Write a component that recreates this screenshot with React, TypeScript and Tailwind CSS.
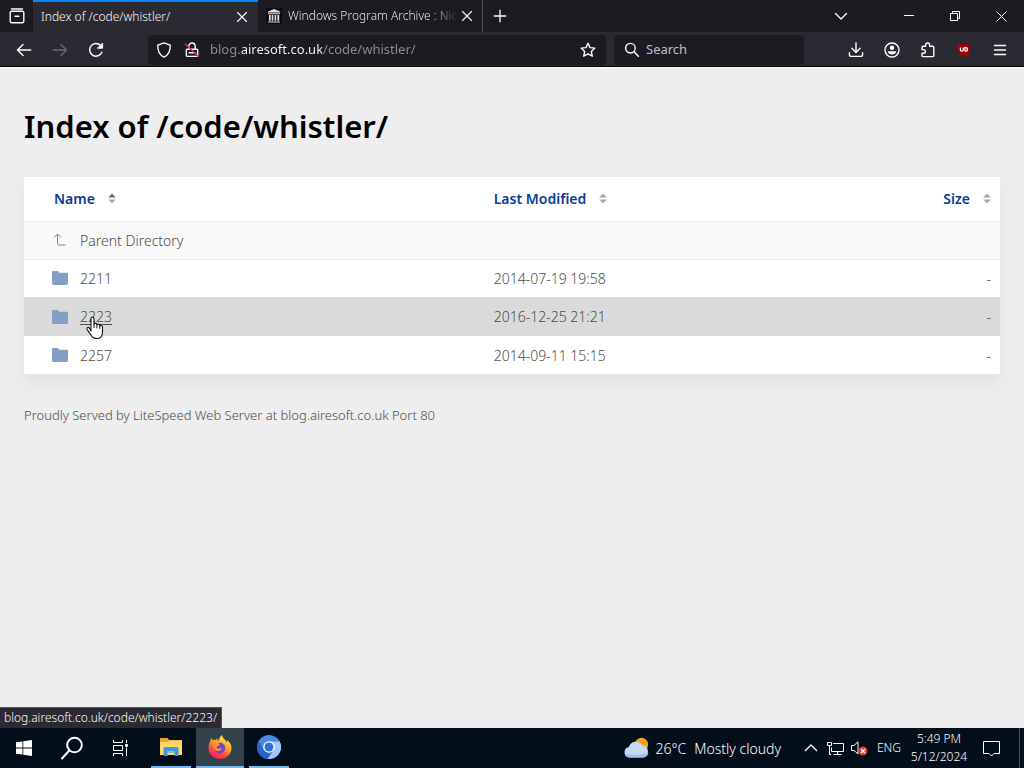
import type { ReactNode } from "react";

type Entry = { name: string; modified: string; hovered?: boolean };

const entries: Entry[] = [
  { name: "2211", modified: "2014-07-19 19:58" },
  { name: "2223", modified: "2016-12-25 21:21", hovered: true },
  { name: "2257", modified: "2014-09-11 15:15" },
];

function Icon({ size = 16, className = "", children }: { size?: number; className?: string; children: ReactNode }) {
  return (
    <svg
      width={size}
      height={size}
      viewBox="0 0 16 16"
      fill="none"
      stroke="currentColor"
      strokeWidth="1.4"
      strokeLinecap="round"
      strokeLinejoin="round"
      className={`shrink-0 ${className}`}
      aria-hidden="true"
    >
      {children}
    </svg>
  );
}

function IconButton({ label, className = "", children }: { label: string; className?: string; children: ReactNode }) {
  return (
    <button type="button" aria-label={label} className={`flex shrink-0 items-center justify-center ${className}`}>
      {children}
    </button>
  );
}

function CloseIcon({ size = 16 }: { size?: number }) {
  return (
    <Icon size={size}>
      <path strokeWidth="1.1" d="M3.5 3.5l9 9M12.5 3.5l-9 9" />
    </Icon>
  );
}

function TabStrip() {
  return (
    <div className="flex h-8 bg-[#1c1b22]">
      <IconButton label="Firefox View" className="w-[33px]">
        <Icon>
          <path d="M2.5 1h11M1.2 4.6v8.600a1.600 1.600 0 0 0 1.600 1.600h10.400a1.600 1.600 0 0 0 1.600-1.600V4.600a1.300 1.300 0 0 0-1.300-1.300h-11a1.300 1.300 0 0 0-1.300 1.300zM6 8.300h4" />
        </Icon>
      </IconButton>
      <div className="flex w-[225px] items-center border-t-2 border-[#0a84ff] bg-[#2b2a33] px-2">
        <span className="flex-1 truncate text-[12px] font-light">Index of /code/whistler/</span>
        <IconButton label="Close tab" className="size-4">
          <CloseIcon />
        </IconButton>
      </div>
      <div className="flex w-[225px] items-center border-r border-[#52525e] pr-[7px] pl-2">
        <svg width="16" height="16" viewBox="0 0 16 16" className="mr-1.5 shrink-0" aria-hidden="true">
          <rect width="16" height="16" fill="#0b0b0d" />
          <path
            fill="#e4e4e4"
            d="M8 1l6.3 2.7v.8H1.7v-.8zM2 5.3h12v.9H2zM2.9 7h1.8v5.8H2.9zM5.7 7h1.6v5.8H5.7zM8.6 7h1.6v5.8H8.6zM11.4 7h1.8v5.8h-1.8zM2 13.4h12v1.2H2z"
          />
        </svg>
        <span className="flex-1 bg-linear-to-r from-[#fbfbfe] from-85% to-[#1c1b22] bg-clip-text text-[12px] font-light whitespace-nowrap text-transparent">
          Windows Program Archive : Nic
        </span>
        <IconButton label="Close tab" className="size-4">
          <CloseIcon />
        </IconButton>
      </div>
      <IconButton label="New tab" className="ml-px w-8">
        <Icon>
          <path strokeWidth="1.3" d="M8 2.2v11.6M2.2 8h11.6" />
        </Icon>
      </IconButton>
      <div className="flex-1" />
      <IconButton label="List all tabs" className="mr-[29px] w-8">
        <Icon>
          <path d="M2.5 5.5L8 11l5.5-5.5" />
        </Icon>
      </IconButton>
      <IconButton label="Minimize" className="w-[46px]">
        <svg width="10" height="10" viewBox="0 0 10 10" stroke="currentColor" aria-hidden="true">
          <path d="M0 4.5h10" />
        </svg>
      </IconButton>
      <IconButton label="Restore" className="w-[46px]">
        <svg width="10" height="10" viewBox="0 0 10 10" fill="none" stroke="currentColor" aria-hidden="true">
          <path d="M.5 2.5h7v7h-7zM2.5 2.5v-2h7v7h-2" />
        </svg>
      </IconButton>
      <IconButton label="Close window" className="w-[46px]">
        <svg width="11" height="11" viewBox="0 0 11 11" stroke="currentColor" aria-hidden="true">
          <path d="M.5 .5l10 10M10.500 .5l-10 10" />
        </svg>
      </IconButton>
    </div>
  );
}

function Toolbar() {
  return (
    <div className="flex h-[35px] items-center border-b border-black bg-[#2b2a33] pt-0.5">
      <IconButton label="Back" className="ml-1.5 w-9">
        <Icon>
          <path d="M14.7 8H1.6M7 2.6L1.5 8 7 13.4" />
        </Icon>
      </IconButton>
      <IconButton label="Forward" className="w-9 text-[#6a6972]">
        <Icon>
          <path d="M1.3 8h13.1M9 2.6L14.5 8 9 13.4" />
        </Icon>
      </IconButton>
      <IconButton label="Reload" className="w-9">
        <Icon>
          <path strokeWidth="1.5" d="M13.8 10.2A6.3 6.3 0 1 1 12.6 3.6" />
          <path fill="currentColor" strokeWidth="1" d="M14.6 1.4v4.8H9.8z" />
        </Icon>
      </IconButton>
      <div className="ml-[34px] flex h-[30px] min-w-0 flex-1 items-center rounded-sm bg-[#1c1b22] pr-2.5 pl-2">
        <Icon>
          <path d="M8 .9l6.2 2.2c.3 4.9-1.2 9.5-6.2 12C3 12.6 1.500 8 1.800 3.100z" />
        </Icon>
        <Icon className="ml-3">
          <path d="M4.8 7V4.200a3.200 3.200 0 0 1 6.400 0V7M3.200 7.300h9.600a.9.900 0 0 1 .9.900v5.200a1 1 0 0 1-1 1H3.300a1 1 0 0 1-1-1V8.200a.9.900 0 0 1 .9-.9zM5 10.800h6" />
          <path stroke="#e22850" strokeWidth="1.500" d="M1.200 2l13 12.300" />
        </Icon>
        <input
          type="text"
          aria-label="Address"
          defaultValue="blog.airesoft.co.uk/code/whistler/"
          className="ml-2.5 min-w-0 flex-1 bg-[linear-gradient(to_right,#8f8e97_30px,#fbfbfe_30px,#fbfbfe_112px,#8f8e97_112px)] bg-clip-text text-[13px] text-transparent outline-none"
        />
        <IconButton label="Bookmark this page" className="size-4">
          <Icon>
            <path d="M8 1.200l2 4.400 4.900.5-3.600 3.300 1 4.800L8 11.800l-4.300 2.400 1-4.800L1.100 6.100 6 5.600z" />
          </Icon>
        </IconButton>
      </div>
      <label className="ml-2 flex h-[30px] w-[190px] items-center rounded-sm bg-[#1c1b22] px-2.5">
        <Icon>
          <circle cx="6.400" cy="6.200" r="4.800" />
          <path strokeWidth="1.600" d="M10 9.800l4.400 4.400" />
        </Icon>
        <input
          type="text"
          aria-label="Search"
          placeholder="Search"
          className="ml-1.5 min-w-0 flex-1 bg-transparent text-[13px] outline-none placeholder:text-[#bfbfc9]"
        />
      </label>
      <div className="ml-[34px] flex pr-1.5">
        <IconButton label="Downloads" className="w-9">
          <Icon>
            <path d="M8 .8v9.400M3.900 6.300L8 10.400l4.100-4.100M1.400 10.800v1.600a2 2 0 0 0 2 2h9.200a2 2 0 0 0 2-2v-1.600" />
          </Icon>
        </IconButton>
        <IconButton label="Account" className="w-9">
          <Icon>
            <circle cx="8" cy="8" r="7" />
            <circle cx="8" cy="5.800" r="2.200" fill="currentColor" stroke="none" />
            <path d="M3.600 9.300h8.800a4.600 4.600 0 0 1-8.800 0z" fill="currentColor" stroke="none" />
          </Icon>
        </IconButton>
        <IconButton label="Extensions" className="w-9">
          <Icon>
            <path d="M5.600 4.200V3a2 2 0 0 1 4 0v1.200h3a1.200 1.200 0 0 1 1.200 1.200v8a1.200 1.200 0 0 1-1.200 1.200H3.200A1.200 1.200 0 0 1 2 13.400v-2.200h1.600a1.500 1.500 0 0 0 0-3.600H2V5.400a1.200 1.200 0 0 1 1.200-1.200z" />
          </Icon>
        </IconButton>
        <IconButton label="uBlock Origin" className="w-9">
          <svg width="16" height="16" viewBox="0 0 16 16" fill="none" aria-hidden="true">
            <path fill="#9c0006" d="M8 .6c1.800 1.300 4 1.900 6.600 2 .2 6-.4 9.400-6.600 13C1.800 12 1.200 8.600 1.400 2.600 4 2.500 6.200 1.900 8 .6z" />
            <path stroke="#fff" strokeWidth="1.200" d="M4.400 5.400v2.400a1.400 1.400 0 0 0 2.800 0V5.400M9 9.300V5.700h.8a1.700 1.700 0 0 1 0 3.500H8.600" />
          </svg>
        </IconButton>
        <IconButton label="Open menu" className="w-9">
          <Icon>
            <path d="M2.500 3.500h11M2.500 8h11M2.500 12.500h11" />
          </Icon>
        </IconButton>
      </div>
    </div>
  );
}

function SortMark({ active = false }: { active?: boolean }) {
  return (
    <svg width="8" height="11" viewBox="0 0 8 11" aria-hidden="true">
      <path d="M4 .5L7.800 4.500H.2z" fill={active ? "#6b6b6b" : "#a9a9a9"} />
      <path d="M4 10.500L.2 6.500h7.600z" fill="#a9a9a9" />
    </svg>
  );
}

function SortButton({ label, active = false }: { label: string; active?: boolean }) {
  return (
    <button type="button" className="inline-flex items-center gap-[13px] font-semibold text-[#0a3a9c]">
      {label}
      <SortMark active={active} />
    </button>
  );
}

function FolderIcon() {
  return (
    <svg width="16" height="14" viewBox="0 0 16 14" className="shrink-0" aria-hidden="true">
      <path
        fill="#859fc3"
        d="M1.300 0h4.200c.5 0 .8.200 1 .6l.6 1.200h7.600c.7 0 1.300.5 1.300 1.200v9.600c0 .8-.6 1.400-1.300 1.400H1.300C.6 14 0 13.400 0 12.600V1.300C0 .6.600 0 1.300 0z"
      />
    </svg>
  );
}

function HandCursor() {
  return (
    <svg width="18" height="24" viewBox="0 0 18 24" className="absolute top-2.5 left-1.5 z-10" aria-hidden="true">
      <path
        fill="#fff"
        stroke="#111"
        strokeWidth="1.100"
        strokeLinejoin="round"
        d="M5 15V2.500a1.500 1.500 0 0 1 3 0V8.500c0-1.800 2.700-1.800 2.900 0v.8c.2-1.600 2.700-1.500 2.900.2v.9c.3-1.400 2.700-1.200 2.700.6v5.200c0 3.800-2 6.300-5.600 6.300-3 0-4.500-1-6-3.600L1.200 13.600c-1-1.800.9-2.900 2.200-1.500z"
      />
      <path stroke="#111" strokeWidth="1" d="M8 8.500v3.500M10.900 9.300v3M13.800 10.300v2.500" />
    </svg>
  );
}

function DirectoryTable() {
  return (
    <table className="w-full table-fixed bg-white text-left text-[14px] font-light text-[#4c4c4c] shadow-[0_8px_16px_rgba(40,70,80,0.07)]">
      <thead>
        <tr className="h-11 border-b border-[#ececec]">
          <th scope="col" className="w-[47%] pl-[30px]">
            <SortButton label="Name" active />
          </th>
          <th scope="col" className="w-[30%] pl-[11px]">
            <SortButton label="Last Modified" />
          </th>
          <th scope="col" className="pr-[9px] text-right">
            <SortButton label="Size" />
          </th>
        </tr>
      </thead>
      <tbody>
        <tr className="h-[38px] border-b border-[#ececec] bg-[#f9f9f9]">
          <td className="pl-7">
            <a href="../" className="flex w-fit items-center gap-3">
              <svg width="16" height="16" viewBox="0 0 16 16" fill="none" stroke="#778899" className="shrink-0" aria-hidden="true">
                <path d="M5.500 2v9.500a1.500 1.500 0 0 0 1.500 1.500h6.500M2 5.500L5.500 2 9 5.500" />
              </svg>
              Parent Directory
            </a>
          </td>
          <td />
          <td />
        </tr>
        {entries.map((entry) => (
          <tr key={entry.name} className={entry.hovered ? "h-[39px] bg-[#dadada]" : "h-[38px]"}>
            <td className="pl-7">
              <a href={`${entry.name}/`} className="flex w-fit items-center gap-3">
                <FolderIcon />
                <span className={entry.hovered ? "relative underline underline-offset-2" : ""}>
                  {entry.name}
                  {entry.hovered && <HandCursor />}
                </span>
              </a>
            </td>
            <td className="pl-[11px]">{entry.modified}</td>
            <td className="pr-[9px] text-right">-</td>
          </tr>
        ))}
      </tbody>
    </table>
  );
}

function FirefoxLogo() {
  return (
    <svg width="24" height="24" viewBox="0 0 24 24" aria-hidden="true">
      <defs>
        <linearGradient id="fire" x1=".8" y1="0" x2=".25" y2="1">
          <stop offset=".1" stopColor="#ffe838" />
          <stop offset=".45" stopColor="#ff9a25" />
          <stop offset=".7" stopColor="#ff4a3d" />
          <stop offset="1" stopColor="#ec1a72" />
        </linearGradient>
      </defs>
      <path
        fill="url(#fire)"
        d="M14 0c.3 2.200 1.500 3.300 3 4.800 1 .9 1.600 1.800 2 2.900.2-1 .1-1.800-.2-2.600 3.200 2 4.900 5.200 4.700 8.400C23.200 19.500 18.300 24 12 24S.6 19.300.5 13c0-2.700.7-5.200 2-7.200l.4-2.900c.8.500 1.400 1.200 1.900 2 1-.2 2-.2 2.900.1L9.600 3l-.2 2.900c1.300-.5 1.800-1.500 2-2.500C11.800 2 12.700.8 14 0z"
      />
      <circle cx="11.800" cy="13" r="5.400" fill="#7542d5" />
      <path fill="#ff9528" d="M4.700 9c2-1.600 5-1.500 7.200.2-.7 1.600-2.900 1.200-3.300 2.700-.3 1.500 1.500 2.300 3.200 1.600 1-.5 2-.2 2.200.3-.7 1.800-3.700 2.900-6.100 1.600C5.800 14 5 11.400 4.700 9z" />
    </svg>
  );
}

function TaskButton({ label, className = "", children }: { label: string; className?: string; children: ReactNode }) {
  return (
    <button type="button" aria-label={label} className={`flex h-10 shrink-0 items-center justify-center ${className}`}>
      {children}
    </button>
  );
}

function Taskbar() {
  return (
    <footer className="flex h-10 shrink-0 items-center bg-[#020e19] text-white">
      <TaskButton label="Start" className="w-12">
        <svg width="16" height="16" viewBox="0 0 16 16" fill="#fff" aria-hidden="true">
          <path d="M0 2.300l6.500-.9v6.200H0zM7.300 1.300L16 0v7.600H7.300zM0 8.400h6.500v6.200L0 13.700zM7.300 8.400H16V16l-8.700-1.300z" />
        </svg>
      </TaskButton>
      <TaskButton label="Search" className="w-12">
        <svg width="24" height="24" viewBox="0 0 24 24" fill="none" stroke="#fff" strokeWidth="2" aria-hidden="true">
          <circle cx="14.500" cy="9" r="7.300" />
          <path d="M9.300 14.500L1.500 23" />
        </svg>
      </TaskButton>
      <TaskButton label="Task View" className="w-12">
        <svg width="17" height="16" viewBox="0 0 17 16" fill="none" stroke="#fff" aria-hidden="true">
          <path d="M1.500 0v2.500h9V0M1.500 5.500h9v5h-9zM1.500 16v-2.500h9V16M14.500 0v3M14.500 7.500V16" />
          <path fill="#fff" d="M13.500 4.500h2v2h-2z" />
        </svg>
      </TaskButton>
      <TaskButton label="File Explorer" className="ml-[7px] w-10 border-b-2 border-[#76b9ed]">
        <svg width="22" height="20" viewBox="0 0 22 20" aria-hidden="true">
          <path fill="#e9a52b" d="M0 1h7.500l1.800 2H22v13H0z" />
          <path fill="#ffd768" d="M0 5h8l1.500-1.500H22V18H0z" />
          <path fill="#3f97d5" d="M3.500 11.500q0-1.500 1.500-1.500h12q1.500 0 1.500 1.500V19h-4v-3.500h-7V19h-4z" />
          <path fill="#79c3ee" d="M7.500 15.500h7V14h-7z" />
        </svg>
      </TaskButton>
      <TaskButton label="Firefox" className="ml-[5px] w-12 border-b-2 border-[#76b9ed] bg-[#334148]">
        <FirefoxLogo />
      </TaskButton>
      <TaskButton label="Chromium" className="ml-[5px] w-10 border-b-2 border-[#76b9ed]">
        <svg width="24" height="24" viewBox="0 0 24 24" aria-hidden="true">
          <circle cx="12" cy="12" r="12" fill="#4a86e8" />
          <path fill="#2b62c9" d="M1.600 6A12 12 0 0 0 10.600 23.900L15.700 15 12 18 6.800 15z" />
          <path fill="#a5c8fb" d="M12 6.500h10.700A12 12 0 0 1 10.600 23.900l6.200-9z" />
          <circle cx="12" cy="12" r="5.800" fill="#fff" />
          <circle cx="12" cy="12" r="4.500" fill="#2f6fe0" />
        </svg>
      </TaskButton>
      <div className="flex-1" />
      <button type="button" className="flex h-10 items-center text-[14px] font-light whitespace-nowrap">
        <svg width="26" height="22" viewBox="0 0 26 22" className="mr-1.5" aria-hidden="true">
          <circle cx="17.500" cy="7.500" r="6.700" fill="#f6a020" />
          <path fill="#c8d9f4" d="M5.500 20.500a5.300 5.300 0 0 1-.6-10.500 7.300 7.300 0 0 1 13.300-1.800 6.300 6.300 0 0 1 1.300 12.300z" />
          <path fill="#a6bfe9" d="M5.500 20.500a5.300 5.300 0 0 1-4.800-4q11 3 23.800-.800a6.200 6.200 0 0 1-5 4.800z" />
        </svg>
        <span className="mr-2">26°C</span>
        <span>Mostly cloudy</span>
      </button>
      <TaskButton label="Show hidden icons" className="ml-[18px] w-6">
        <svg width="14" height="8" viewBox="0 0 14 8" fill="none" stroke="#fff" strokeWidth="1.300" aria-hidden="true">
          <path d="M1 7l6-6 6 6" />
        </svg>
      </TaskButton>
      <TaskButton label="Network" className="w-6">
        <svg width="17" height="15" viewBox="0 0 17 15" fill="none" stroke="#fff" aria-hidden="true">
          <path d="M6 2.500h10.500v8H4.500V6.500M.5 1.500h4v3h-4zM2.500 4.500v9H4M10.500 10.500v3M6.500 13.500h8" />
        </svg>
      </TaskButton>
      <TaskButton label="Volume muted" className="w-6">
        <svg width="17" height="16" viewBox="0 0 17 16" fill="none" aria-hidden="true">
          <path stroke="#fff" d="M.5 5.500h2.500L7 1.800v12L3 10.500H.5z" />
          <circle cx="12" cy="11" r="4.500" fill="#d83b34" />
          <path stroke="#fff" strokeWidth="1.300" d="M10 9l4 4M14 9l-4 4" />
        </svg>
      </TaskButton>
      <button type="button" className="h-10 w-9 text-center text-[12px] font-light">
        ENG
      </button>
      <button type="button" className="h-10 w-16 text-center text-[12px] leading-[18px] font-light whitespace-nowrap">
        5:49 PM
        <br />
        5/12/2024
      </button>
      <TaskButton label="Notifications" className="w-10">
        <svg width="17" height="17" viewBox="0 0 17 17" fill="none" stroke="#fff" aria-hidden="true">
          <path d="M.5 1.500h16v12H11L8.500 16 6 13.500H.5z" />
        </svg>
      </TaskButton>
      <button type="button" aria-label="Show desktop" className="ml-2 h-10 w-[5px] border-l border-[#46505a]" />
    </footer>
  );
}

export default function App() {
  return (
    <div className="flex h-screen flex-col overflow-hidden bg-[#eeeeee] font-['Noto_Sans',sans-serif]">
      <header className="shrink-0 border-b border-white text-[#fbfbfe]">
        <TabStrip />
        <Toolbar />
      </header>
      <main className="relative flex-1 px-6 pt-9">
        <h1 className="text-[31px] leading-[44px] font-semibold text-black">Index of /code/whistler/</h1>
        <div className="mt-[29px]">
          <DirectoryTable />
        </div>
        <p className="mt-8 text-[13px] leading-[18px] font-light text-[#4c4c4c]">
          Proudly Served by LiteSpeed Web Server at blog.airesoft.co.uk Port 80
        </p>
        <div className="absolute bottom-0 left-0 border-t border-r border-[#55545c] bg-[#2b2a33] px-1 text-[12px] leading-5 font-light text-[#fbfbfe]">
          blog.airesoft.co.uk/code/whistler/2223/
        </div>
      </main>
      <Taskbar />
    </div>
  );
}
